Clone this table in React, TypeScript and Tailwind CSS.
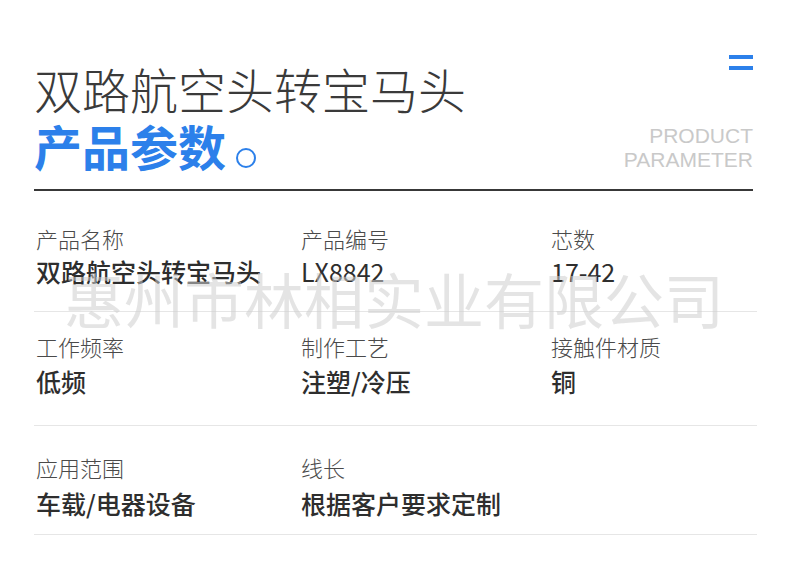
import React from "react";

const cjk = { fontFamily: '"Noto Sans CJK SC", "Noto Sans", sans-serif' };

type Item = { label: string; value: string; latin?: boolean };

function Cell({ item, gap }: { item?: Item; gap: string }) {
  if (!item) return <div />;
  return (
    <div className="flex flex-col">
      <div className="text-[22px] leading-[22px] text-[#4a4a4a] font-light">{item.label}</div>
      <div
        className={`${gap} text-[25px] leading-[25px] text-[#2e2e2e] ${item.latin ? "font-normal" : "font-medium"}`}
      >
        {item.value}
      </div>
    </div>
  );
}

function Row({
  items,
  cls,
  gap,
}: {
  items: (Item | undefined)[];
  cls: string;
  gap: string;
}) {
  return (
    <div className={`${cls} pl-[2px] border-b border-[#e6e6e6] grid grid-cols-[265px_250px_1fr]`}>
      {items.map((it, i) => (
        <Cell key={i} item={it} gap={gap} />
      ))}
    </div>
  );
}

export default function App() {
  return (
    <div className="relative w-[790px] h-[579px] bg-white overflow-hidden" style={cjk}>
      <div className="pl-[34px] pr-[37px] pt-[64px]">
        <div className="flex justify-between items-start">
          <div>
            <div className="text-[48px] leading-[48px] font-light text-[#3a3a3a]">双路航空头转宝马头</div>
            <div className="mt-[9px] flex items-end">
              <span className="text-[48px] leading-[48px] font-bold text-[#2c80ea]">产品参数</span>
              <span className="ml-[10px] mb-[1px] inline-block w-[20px] h-[20px] rounded-full border-[2.5px] border-[#2c80ea]" />
            </div>
          </div>
          <div className="flex flex-col items-end">
            <div className="-mt-[9px] w-[24px] flex flex-col gap-[7px]">
              <div className="h-[4px] bg-[#2c80ea]" />
              <div className="h-[4px] bg-[#2c80ea]" />
            </div>
            <div
              className="mt-[54px] text-right text-[21px] leading-[24px] text-[#c9c9c9]"
              style={{ fontFamily: '"Liberation Sans", Arial, sans-serif' }}
            >
              <div>PRODUCT</div>
              <div>PARAMETER</div>
            </div>
          </div>
        </div>
        <div className="mt-[17px] h-[2px] bg-[#383838]" />
      </div>

      <div className="pl-[34px] pr-[33px]">
        <Row
          cls="pt-[36px] pb-[27px]"
          gap="mt-[10px]"
          items={[
            { label: "产品名称", value: "双路航空头转宝马头" },
            { label: "产品编号", value: "LX8842", latin: true },
            { label: "芯数", value: "17-42", latin: true },
          ]}
        />
        <Row
          cls="pt-[23px] pb-[31px]"
          gap="mt-[12px]"
          items={[
            { label: "工作频率", value: "低频" },
            { label: "制作工艺", value: "注塑/冷压" },
            { label: "接触件材质", value: "铜" },
          ]}
        />
        <Row
          cls="pt-[30px] pb-[18px]"
          gap="mt-[13px]"
          items={[
            { label: "应用范围", value: "车载/电器设备" },
            { label: "线长", value: "根据客户要求定制" },
            undefined,
          ]}
        />
      </div>

      <div className="absolute left-[64px] top-[268px] text-[60px] leading-[60px] font-normal whitespace-nowrap pointer-events-none text-[rgba(205,205,205,0.55)]">
        惠州市林相实业有限公司
      </div>
    </div>
  );
}
